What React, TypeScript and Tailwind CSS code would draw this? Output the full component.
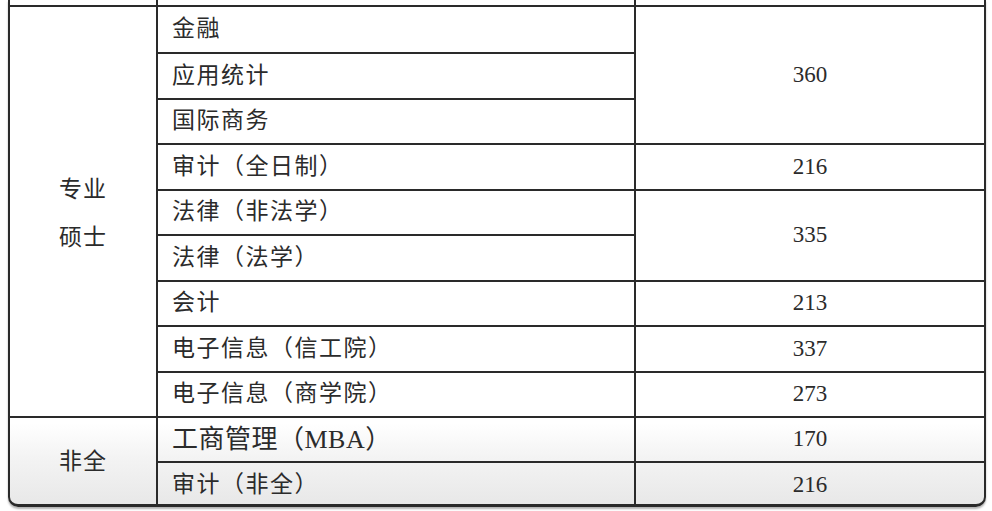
import React from 'react'

const cjk = { fontFamily: '"Liberation Serif", "Noto Sans CJK SC", serif' }

interface Row {
  name: string
  big?: boolean
}

const rows: Row[] = [
  { name: '金融' },
  { name: '应用统计' },
  { name: '国际商务' },
  { name: '审计（全日制）' },
  { name: '法律（非法学）' },
  { name: '法律（法学）' },
  { name: '会计' },
  { name: '电子信息（信工院）' },
  { name: '电子信息（商学院）' },
  { name: '工商管理（MBA）', big: true },
  { name: '审计（非全）' },
]

// score cells: [text, start row (1-based), span]
const scores: [string, number, number][] = [
  ['360', 1, 3],
  ['216', 4, 1],
  ['335', 5, 2],
  ['213', 7, 1],
  ['337', 8, 1],
  ['273', 9, 1],
  ['170', 10, 1],
  ['216', 11, 1],
]

const spanClass: Record<number, string> = {
  1: 'row-span-1',
  2: 'row-span-2',
  3: 'row-span-3',
}

const startClass: Record<number, string> = {
  1: 'row-start-1',
  2: 'row-start-2',
  3: 'row-start-3',
  4: 'row-start-4',
  5: 'row-start-5',
  6: 'row-start-6',
  7: 'row-start-7',
  8: 'row-start-8',
  9: 'row-start-9',
  10: 'row-start-10',
  11: 'row-start-11',
}

export default function App() {
  return (
    <div className="w-[992px] h-[511px] bg-white overflow-hidden text-[#2b2b2b]" style={cjk}>
      <div className="ml-[8px] w-[978px] h-[507px] flex flex-col border-x-2 border-b-[3px] border-[#2a2a2a] rounded-b-[10px] shadow-[0_2px_2px_rgba(0,0,0,0.3)] overflow-hidden bg-[linear-gradient(to_bottom,#ffffff_0%,#ffffff_84%,#f3f3f3_91%,#e8e8e8_100%)]">
        {/* sliver of the row above */}
        <div className="h-[5px] grid grid-cols-[146px_478px_1fr] shrink-0">
          <div />
          <div className="border-l-2 border-[#2a2a2a]" />
          <div className="border-l-2 border-[#2a2a2a]" />
        </div>

        <div className="grid grid-cols-[146px_478px_1fr] grid-rows-[repeat(11,45.45px)] border-t-2 border-[#2a2a2a]">
          {/* group column */}
          <div className="col-start-1 row-start-1 row-span-9 flex flex-col items-center justify-center pt-[6px] text-[23px] leading-[48px] tracking-[1px]">
            <span>专业</span>
            <span>硕士</span>
          </div>
          <div className="col-start-1 row-start-10 row-span-2 border-t-2 border-[#2a2a2a] flex items-center justify-center text-[23px] tracking-[1px]">
            非全
          </div>

          {/* major column */}
          {rows.map((r, i) => (
            <div
              key={r.name}
              className={`col-start-2 ${startClass[i + 1]} border-l-2 border-[#2a2a2a] ${i > 0 ? 'border-t-2' : ''} flex items-center pl-[14px] ${r.big ? 'text-[26px] tracking-[0.5px]' : 'text-[23px] tracking-[1.5px]'}`}
            >
              {r.name}
            </div>
          ))}

          {/* score column */}
          {scores.map(([v, start, span], i) => (
            <div
              key={i}
              className={`col-start-3 ${startClass[start]} ${spanClass[span]} border-l-2 border-[#2a2a2a] ${start > 1 ? 'border-t-2' : ''} flex items-center justify-center text-[23px]`}
            >
              {v}
            </div>
          ))}
        </div>
      </div>
    </div>
  )
}
